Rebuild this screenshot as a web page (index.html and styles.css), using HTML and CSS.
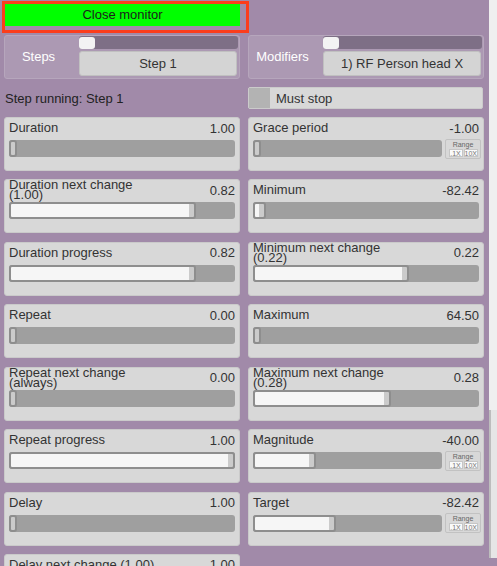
FILE: index.html
```html
<!DOCTYPE html>
<html>
<head>
<meta charset="utf-8">
<link rel="stylesheet" href="styles.css">
</head>
<body>
<div class="main">
  <div class="close-frame"><div class="close-btn">Close monitor</div></div>

  <div class="two-col top-row">
    <div class="selector">
      <div class="sel-label">Steps</div>
      <div class="sel-body">
        <div class="sel-slider"><div class="sel-handle"></div></div>
        <div class="sel-btn">Step 1</div>
      </div>
    </div>
    <div class="selector">
      <div class="sel-label">Modifiers</div>
      <div class="sel-body">
        <div class="sel-slider"><div class="sel-handle"></div></div>
        <div class="sel-btn">1) RF Person head X</div>
      </div>
    </div>
  </div>

  <div class="two-col status-row">
    <div class="status">Step running: Step 1</div>
    <div class="toggle"><div class="check"></div><span>Must stop</span></div>
  </div>

  <div class="two-col grid">
    <div class="column">
      <div class="panel">
        <div class="head"><div class="label">Duration</div><div class="value">1.00</div></div>
        <div class="slider-row"><div class="track"><div class="fill" style="width:0%"></div></div></div>
      </div>
      <div class="panel">
        <div class="head"><div class="label">Duration next change<br>(1.00)</div><div class="value">0.82</div></div>
        <div class="slider-row"><div class="track"><div class="fill" style="width:82.7%"></div></div></div>
      </div>
      <div class="panel">
        <div class="head"><div class="label">Duration progress</div><div class="value">0.82</div></div>
        <div class="slider-row"><div class="track"><div class="fill" style="width:82.7%"></div></div></div>
      </div>
      <div class="panel">
        <div class="head"><div class="label">Repeat</div><div class="value">0.00</div></div>
        <div class="slider-row"><div class="track"><div class="fill" style="width:0%"></div></div></div>
      </div>
      <div class="panel">
        <div class="head"><div class="label">Repeat next change<br>(always)</div><div class="value">0.00</div></div>
        <div class="slider-row"><div class="track"><div class="fill" style="width:0%"></div></div></div>
      </div>
      <div class="panel">
        <div class="head"><div class="label">Repeat progress</div><div class="value">1.00</div></div>
        <div class="slider-row"><div class="track"><div class="fill" style="width:100%"></div></div></div>
      </div>
      <div class="panel">
        <div class="head"><div class="label">Delay</div><div class="value">1.00</div></div>
        <div class="slider-row"><div class="track"><div class="fill" style="width:0%"></div></div></div>
      </div>
      <div class="panel">
        <div class="head"><div class="label">Delay next change (1.00)</div><div class="value">1.00</div></div>
        <div class="slider-row"><div class="track"><div class="fill" style="width:0%"></div></div></div>
      </div>
    </div>

    <div class="column">
      <div class="panel">
        <div class="head"><div class="label">Grace period</div><div class="value">-1.00</div></div>
        <div class="slider-row">
          <div class="track"><div class="fill" style="width:0%"></div></div>
          <div class="range"><div class="range-title">Range</div><div class="range-btns"><div class="rb">.1X</div><div class="rb">10X</div></div></div>
        </div>
      </div>
      <div class="panel">
        <div class="head"><div class="label">Minimum</div><div class="value">-82.42</div></div>
        <div class="slider-row"><div class="track"><div class="fill" style="width:5.8%"></div></div></div>
      </div>
      <div class="panel">
        <div class="head"><div class="label">Minimum next change<br>(0.22)</div><div class="value">0.22</div></div>
        <div class="slider-row"><div class="track"><div class="fill" style="width:69%"></div></div></div>
      </div>
      <div class="panel">
        <div class="head"><div class="label">Maximum</div><div class="value">64.50</div></div>
        <div class="slider-row"><div class="track"><div class="fill" style="width:0%"></div></div></div>
      </div>
      <div class="panel">
        <div class="head"><div class="label">Maximum next change<br>(0.28)</div><div class="value">0.28</div></div>
        <div class="slider-row"><div class="track"><div class="fill" style="width:61%"></div></div></div>
      </div>
      <div class="panel">
        <div class="head"><div class="label">Magnitude</div><div class="value">-40.00</div></div>
        <div class="slider-row">
          <div class="track"><div class="fill" style="width:33.5%"></div></div>
          <div class="range"><div class="range-title">Range</div><div class="range-btns"><div class="rb">.1X</div><div class="rb">10X</div></div></div>
        </div>
      </div>
      <div class="panel">
        <div class="head"><div class="label">Target</div><div class="value">-82.42</div></div>
        <div class="slider-row">
          <div class="track"><div class="fill" style="width:44%"></div></div>
          <div class="range"><div class="range-title">Range</div><div class="range-btns"><div class="rb">.1X</div><div class="rb">10X</div></div></div>
        </div>
      </div>
    </div>
  </div>
</div>
<div class="scrollbar">
  <div class="thumb"></div>
  <div class="sb-track"></div>
</div>
</body>
</html>
```

FILE: styles.css
```css
html, body {
  margin: 0;
  padding: 0;
}
body {
  width: 497px;
  height: 566px;
  overflow: hidden;
  display: flex;
  background: #a18aa9;
  font-family: "Liberation Sans", Arial, sans-serif;
  font-size: 13px;
  color: #333;
}
.main {
  width: 489px;
  box-sizing: border-box;
  padding: 1px 0 0 4px;
}
.scrollbar {
  width: 8px;
  display: flex;
  flex-direction: column;
}
.thumb {
  height: 410px;
  background: #efefef;
}
.sb-track {
  height: 148px;
  box-sizing: border-box;
  background: #e6e6e6;
  border-left: 2px solid #bdbdbd;
}

.close-frame {
  margin-left: -2px;
  width: 247px;
  box-sizing: border-box;
  border: 3px solid #fb3d1c;
  padding: 0 6px 4px 0;
}
.close-btn {
  height: 22px;
  line-height: 22px;
  background: #00ff00;
  color: #1c1c1c;
  text-align: center;
}

.two-col {
  display: grid;
  grid-template-columns: 236px 236px;
  column-gap: 8px;
}
.top-row {
  margin-top: 2px;
}
.selector {
  height: 44px;
  box-sizing: border-box;
  display: flex;
  background: #ac99b3;
  border: 1px solid #b6a6bc;
  border-radius: 3px;
  padding: 0 1px 2px 0;
}
.sel-label {
  width: 67px;
  padding-right: 7px;
  color: #fff;
  text-align: center;
  align-self: center;
}
.sel-body {
  flex: 1;
  display: flex;
  flex-direction: column;
  gap: 2px;
}
.sel-slider {
  height: 13px;
  background: #7e6f86;
  border-radius: 3px;
  display: flex;
  align-items: center;
}
.sel-handle {
  width: 16px;
  height: 12px;
  background: #f3f3f3;
  border-radius: 3px;
}
.sel-btn {
  height: 25px;
  box-sizing: border-box;
  margin-right: 1px;
  background: #d4d4d4;
  border: 1px solid #c0c0c0;
  border-radius: 3px;
  display: flex;
  align-items: center;
  justify-content: center;
  color: #333;
}

.status-row {
  height: 38px;
  align-items: center;
}
.status {
  padding-left: 1px;
  color: #222;
}
.toggle {
  width: 235px;
  height: 22px;
  box-sizing: border-box;
  display: flex;
  align-items: center;
  background: #d8d8d8;
  border: 1px solid #cbcbcb;
  border-radius: 2px;
  color: #333;
}
.check {
  width: 21px;
  align-self: stretch;
  background: #b3b3b3;
  margin-right: 6px;
}

.column {
  display: flex;
  flex-direction: column;
  gap: 8.43px;
}
.panel {
  height: 54px;
  flex: none;
  box-sizing: border-box;
  background: #d8d8d8;
  border: 1px solid #cacaca;
  border-radius: 3px;
  padding: 0 4px;
}
.head {
  height: 20px;
  display: flex;
  justify-content: space-between;
  align-items: center;
}
.label {
  line-height: 10px;
  white-space: nowrap;
}
.value {
  line-height: 13px;
}
.slider-row {
  margin-top: 2px;
  height: 17px;
  display: flex;
  align-items: center;
  gap: 3px;
}
.track {
  flex: 1;
  height: 17px;
  background: #9f9f9f;
  border-radius: 3px;
}
.fill {
  height: 17px;
  min-width: 8px;
  box-sizing: border-box;
  border: 2px solid #8e8e8e;
  border-radius: 3px;
  background: linear-gradient(to left, #cbcbcb 5px, #f6f6f6 5px);
}
.range {
  width: 36px;
  height: 20px;
  box-sizing: border-box;
  margin-right: -2px;
  border: 1px solid #c2c2c2;
  border-radius: 2px;
  display: flex;
  flex-direction: column;
  align-items: center;
}
.range-title {
  font-size: 7px;
  line-height: 9px;
  color: #666;
}
.range-btns {
  display: flex;
  gap: 1px;
}
.rb {
  width: 14px;
  height: 8px;
  box-sizing: border-box;
  background: #fafafa;
  border: 1px solid #c6c6c6;
  font-size: 7px;
  line-height: 7px;
  text-align: center;
  color: #777;
}
```
